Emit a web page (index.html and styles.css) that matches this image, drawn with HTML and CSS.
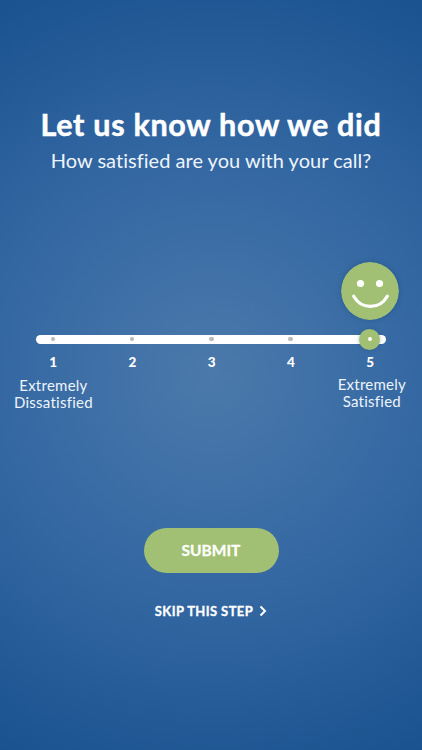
FILE: index.html
```html
<!DOCTYPE html>
<html lang="en">
<head>
<meta charset="utf-8">
<title>Call feedback</title>
<link rel="stylesheet" href="styles.css">
</head>
<body>
<main class="screen">
  <header class="intro">
    <h1 class="title">Let us know how we did</h1>
    <p class="subtitle">How satisfied are you with your call?</p>
  </header>
  <section class="rating">
    <div class="face-row">
      <svg class="face" width="58" height="58" viewBox="0 0 58 58">
        <circle cx="29" cy="29" r="29" fill="#a1c073"/>
        <circle cx="19.5" cy="21.5" r="3.6" fill="#fff"/>
        <circle cx="38.5" cy="21.5" r="3.6" fill="#fff"/>
        <path d="M12.7 34.2C20.5 47.8 38.5 47.8 46.3 34.2" fill="none" stroke="#fff" stroke-width="3.2" stroke-linecap="round"/>
      </svg>
    </div>
    <div class="track">
      <span class="stop"><span class="dot"></span></span>
      <span class="stop"><span class="dot"></span></span>
      <span class="stop"><span class="dot"></span></span>
      <span class="stop"><span class="dot"></span></span>
      <span class="stop"><span class="knob"><span class="knob-dot"></span></span></span>
    </div>
    <div class="scale">
      <span>1</span><span>2</span><span>3</span><span>4</span><span>5</span>
    </div>
    <div class="labels">
      <p class="label">Extremely<br>Dissatisfied</p>
      <p class="label high">Extremely<br>Satisfied</p>
    </div>
  </section>
  <footer class="actions">
    <button class="submit">SUBMIT</button>
    <a class="skip"><span>SKIP THIS STEP</span>
      <svg width="8" height="12" viewBox="0 0 8 12"><path d="M1.5 1.5L6 6L1.5 10.5" fill="none" stroke="#fff" stroke-width="2"/></svg>
    </a>
  </footer>
</main>
</body>
</html>
```
FILE: styles.css
```css
* { box-sizing: border-box; margin: 0; padding: 0; }

body {
  width: 422px;
  height: 750px;
  overflow: hidden;
  font-family: Lato, "Open Sans", sans-serif;
  font-variant-ligatures: none;
  color: #fff;
}

.screen {
  width: 422px;
  height: 750px;
  padding-top: 106px;
  display: flex;
  flex-direction: column;
  background: radial-gradient(circle 431px at 211px 375px, #4b79ab 0%, #3367a2 52%, #19528f 100%);
}

.intro { text-align: center; white-space: nowrap; }

.title {
  font-size: 30.5px;
  line-height: 36px;
  font-weight: 700;
  letter-spacing: 0.72px;
  -webkit-text-stroke: 0.5px #fff;
}

.subtitle {
  font-size: 20px;
  line-height: 24px;
  margin-top: 6px;
  color: #eef4fb;
  letter-spacing: 0.03px;
}

.rating { margin-top: 90px; }

.face-row { display: flex; justify-content: flex-end; padding-right: 23px; }

.face { border-radius: 50%; box-shadow: 0 0 5px rgba(20, 60, 100, 0.35); }

.track {
  width: 350px;
  height: 9px;
  margin: 14.5px 0 0 36px;
  padding: 0 5.5px 0 6.4px;
  display: flex;
  align-items: center;
  justify-content: space-between;
  border-radius: 5px;
  background: #fff;
}

.stop { flex: none; width: 21px; display: grid; place-items: center; }

.dot { width: 4.5px; height: 4.5px; border-radius: 50%; background: #b9b9bc; }

.knob {
  width: 21px;
  height: 21px;
  display: grid;
  place-items: center;
  border-radius: 50%;
  background: #a1c073;
  box-shadow: 0 0 4px rgba(20, 60, 100, 0.3);
}

.knob-dot { width: 4.5px; height: 4.5px; border-radius: 50%; background: #fff; }

.scale {
  display: grid;
  grid-template-columns: repeat(5, 79.25px);
  margin: 10.5px 0 0 13.5px;
  text-align: center;
  font-size: 13.5px;
  line-height: 16px;
  font-weight: 900;
}

.labels {
  display: flex;
  justify-content: space-between;
  padding: 0 16px 0 14px;
  margin-top: 7px;
}

.label {
  font-size: 15px;
  line-height: 17px;
  text-align: center;
  color: #eef4fb;
  letter-spacing: 0.25px;
  white-space: nowrap;
}

.high { margin-top: -1px; }

.actions {
  display: flex;
  flex-direction: column;
  align-items: center;
  margin-top: 117px;
}

.submit {
  width: 135px;
  height: 45px;
  padding-bottom: 1px;
  border: 0;
  border-radius: 23px;
  background: #a1c073;
  color: #fff;
  font: 700 15.5px/43px Lato, sans-serif;
  -webkit-text-stroke: 0.3px #fff;
}

.skip {
  display: flex;
  align-items: center;
  gap: 6px;
  margin-top: 30px;
  font-size: 13px;
  line-height: 16px;
  font-weight: 700;
  letter-spacing: 0.4px;
  -webkit-text-stroke: 0.3px #fff;
}
```
